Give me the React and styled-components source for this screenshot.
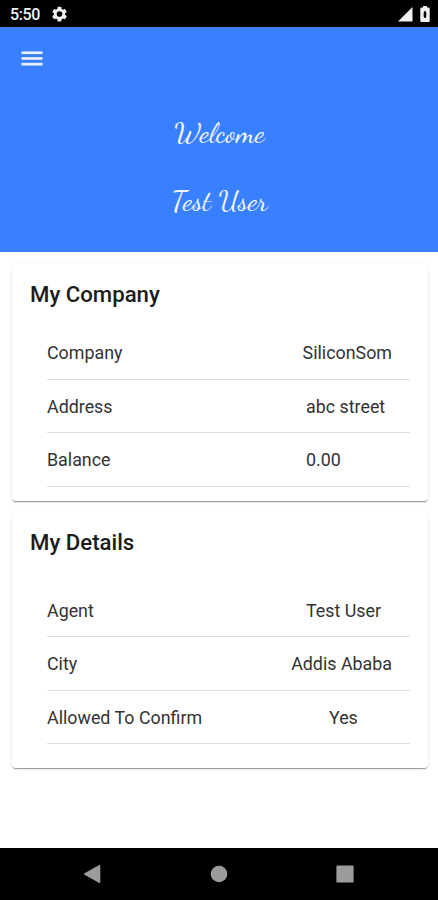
import styled, { createGlobalStyle } from "styled-components";

const GlobalStyle = createGlobalStyle`
  * {
    box-sizing: border-box;
  }

  body {
    margin: 0;
    background-color: #ffffff;
    font-family: Roboto, sans-serif;
  }
`;

const Screen = styled.div`
  width: 100%;
  height: 900px;
  display: flex;
  flex-direction: column;
  overflow: hidden;
`;

const StatusBar = styled.div`
  height: 27px;
  flex-shrink: 0;
  display: flex;
  align-items: center;
  justify-content: space-between;
  padding: 1px 8px 0 10px;
  background-color: #000000;
  color: #f2f2f2;
`;

const StatusGroup = styled.div`
  display: flex;
  align-items: center;
  gap: ${(props) => props.$gap};
`;

const Clock = styled.span`
  font-size: 16px;
  font-weight: 500;
  line-height: 21px;
  letter-spacing: -0.4px;
`;

const Header = styled.header`
  height: 225px;
  flex-shrink: 0;
  display: flex;
  flex-direction: column;
  background-color: #3880ff;
  color: #f1f6ff;
`;

const MenuButton = styled.button`
  width: 64px;
  height: 64px;
  display: flex;
  align-items: center;
  justify-content: center;
  padding: 0;
  border: none;
  background: none;
`;

const Greeting = styled.h1`
  height: 68px;
  margin: 0;
  padding-left: 1px;
  display: flex;
  align-items: center;
  justify-content: center;
  font-family: "Dancing Script", cursive;
  font-size: 29px;
  font-weight: 400;
`;

const Greetings = styled.div`
  padding-top: 7px;
`;

const Content = styled.main`
  flex: 1;
  display: flex;
  flex-direction: column;
  gap: 11px;
  padding: 12px 10px 0 12px;
`;

const Card = styled.section`
  height: ${(props) => props.$height};
  padding: 17px 18px 0;
  border-radius: 4px;
  background-color: #ffffff;
  box-shadow: 0 2px 1px -1px rgba(0, 0, 0, 0.26),
    0 1px 1px 0 rgba(0, 0, 0, 0.14), 0 1px 3px 0 rgba(0, 0, 0, 0.12);
`;

const CardTitle = styled.h2`
  margin: 0;
  font-size: 22.2px;
  line-height: 27px;
  font-weight: 500;
  color: #1c1c1c;
`;

const List = styled.div`
  padding: ${(props) => props.$top} 0 0 17px;
`;

const Row = styled.div`
  height: 53.5px;
  display: flex;
  align-items: center;
  justify-content: space-between;
  padding: 1px 18px 0 0;
  border-bottom: 1px solid #dedede;
  font-size: 17.85px;
  color: #333333;
`;

const Value = styled.span`
  min-width: 86px;
  padding-left: ${(props) => (props.$short ? "23px" : "0")};
`;

const NavBar = styled.nav`
  height: 52px;
  flex-shrink: 0;
  background-color: #000000;
  display: flex;
  align-items: center;
  justify-content: space-between;
  padding: 0 84px 0 83px;
`;

const company = [
  { label: "Company", value: "SiliconSom" },
  { label: "Address", value: "abc street" },
  { label: "Balance", value: "0.00" },
];

const details = [
  { label: "Agent", value: "Test User" },
  { label: "City", value: "Addis Ababa" },
  { label: "Allowed To Confirm", value: "Yes", short: true },
];

function InfoCard({ title, items, height, top }) {
  return (
    <Card $height={height}>
      <CardTitle>{title}</CardTitle>
      <List $top={top}>
        {items.map((item) => (
          <Row key={item.label}>
            <span>{item.label}</span>
            <Value $short={item.short}>{item.value}</Value>
          </Row>
        ))}
      </List>
    </Card>
  );
}

export default function App() {
  return (
    <Screen>
      <GlobalStyle />
      <StatusBar>
        <StatusGroup $gap="11px">
          <Clock>5:50</Clock>
          <svg width="17" height="17" viewBox="1 1.500 22 22" fill="currentColor">
            <path d="M19.14 12.94c.04-.3.06-.61.06-.94s-.02-.64-.07-.94l2.03-1.58a.49.49 0 0 0 .12-.61l-1.92-3.32a.49.49 0 0 0-.59-.22l-2.39.96c-.5-.38-1.03-.7-1.62-.94l-.36-2.54a.48.48 0 0 0-.48-.41h-3.84a.47.47 0 0 0-.47.41l-.36 2.54c-.59.24-1.13.57-1.62.94l-2.39-.96a.48.48 0 0 0-.59.22L2.74 8.87c-.12.21-.08.47.12.61l2.03 1.58c-.05.3-.09.63-.09.94s.02.64.07.94l-2.03 1.58a.49.49 0 0 0-.12.61l1.92 3.32c.12.22.37.29.59.22l2.39-.96c.5.38 1.03.7 1.62.94l.36 2.54c.05.24.24.41.48.41h3.84c.24 0 .44-.17.47-.41l.36-2.54c.59-.24 1.13-.56 1.62-.94l2.39.96c.22.08.47 0 .59-.22l1.92-3.32a.48.48 0 0 0-.12-.61l-2.01-1.58zM12 15.6a3.6 3.6 0 1 1 0-7.2 3.6 3.6 0 0 1 0 7.2z" />
          </svg>
        </StatusGroup>
        <StatusGroup $gap="7px">
          <svg width="15" height="15" viewBox="0 0 15 15" fill="currentColor">
            <path d="M0 14.500 14.500 0v14.500z" />
          </svg>
          <svg width="10" height="16" viewBox="0 0 10 16">
            <path
              fill="currentColor"
              fillRule="evenodd"
              d="M3 0h4v1.6h1.5q1.2 0 1.2 1.2v12q0 1.2-1.2 1.2h-7Q.3 16 .3 14.800V2.800Q.3 1.600 1.500 1.600H3zM5 5Q3.600 5 3.600 8.500T5 12Q6.400 12 6.400 8.500T5 5z"
            />
          </svg>
        </StatusGroup>
      </StatusBar>

      <Header>
        <MenuButton aria-label="Menu">
          <svg width="22" height="16" viewBox="0 0 22 16" fill="#e6efff">
            <rect x="0.500" y="0.400" width="21" height="2.700" />
            <rect x="0.500" y="6.100" width="21" height="2.700" />
            <rect x="0.500" y="11.800" width="21" height="2.700" />
          </svg>
        </MenuButton>
        <Greetings>
          <Greeting>Welcome</Greeting>
          <Greeting>Test User</Greeting>
        </Greetings>
      </Header>

      <Content>
        <InfoCard title="My Company" items={company} height="237px" top="18px" />
        <InfoCard title="My Details" items={details} height="256px" top="27.5px" />
      </Content>

      <NavBar>
        <svg width="18" height="20" viewBox="0 0 18 20" fill="#9c9c9c">
          <path d="M1.500 9.300 15.800 1.200q1.500-.7 1.500.8v16q0 1.500-1.500.8L1.500 10.700q-1.200-.7 0-1.400z" />
        </svg>
        <svg width="18" height="18" viewBox="0 0 18 18" fill="#9c9c9c">
          <circle cx="9" cy="9" r="8.300" />
        </svg>
        <svg width="18" height="18" viewBox="0 0 18 18" fill="#9c9c9c">
          <rect x="0.400" y="0.400" width="17.200" height="17.200" rx="1.200" />
        </svg>
      </NavBar>
    </Screen>
  );
}
